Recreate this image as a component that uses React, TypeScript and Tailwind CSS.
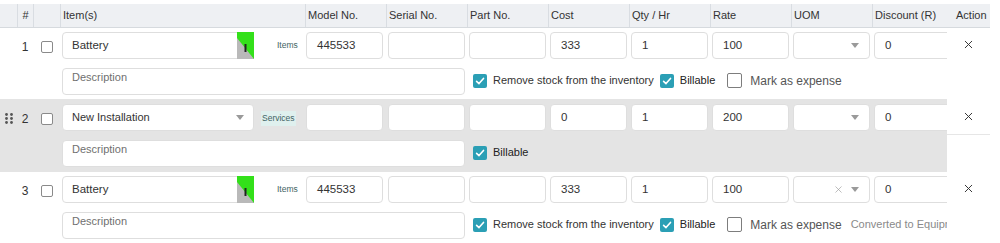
import { X } from "lucide-react";

type Row = {
  id: number;
  item: string;
  kind: "Items" | "Services";
  model: string;
  cost: string;
  qty: string;
  rate: string;
  discount: string;
  shaded?: boolean;
  clearable?: boolean;
  converted?: boolean;
};

const rows: Row[] = [
  { id: 1, item: "Battery", kind: "Items", model: "445533", cost: "333", qty: "1", rate: "100", discount: "0" },
  { id: 2, item: "New Installation", kind: "Services", model: "", cost: "0", qty: "1", rate: "200", discount: "0", shaded: true },
  { id: 3, item: "Battery", kind: "Items", model: "445533", cost: "333", qty: "1", rate: "100", discount: "0", clearable: true, converted: true },
];

const headers = ["", "#", "", "Item(s)", "Model No.", "Serial No.", "Part No.", "Cost", "Qty / Hr", "Rate", "UOM", "Discount (R)", "Action"];

const grid =
  "grid grid-cols-[17px_16px_27px_245px_81px_81px_81px_81px_81px_81px_81px_75px_43px]";

const inputCls =
  "flex h-[27px] w-[77px] items-center rounded-[4px] border border-[#dedede] bg-white pl-[10px] text-[11.5px] text-[#333]";

function Caret() {
  return (
    <svg width="8" height="5" viewBox="0 0 8 5" className="shrink-0">
      <path d="M0 0 L8 0 L4 5 Z" fill="#9a9a9a" />
    </svg>
  );
}

function Check({ checked }: { checked: boolean }) {
  if (!checked) {
    return <span className="block h-[15px] w-[15px] shrink-0 rounded-[2px] border border-[#7d7d7d] bg-white" />;
  }
  return (
    <span className="flex h-[14px] w-[14px] shrink-0 items-center justify-center rounded-[2px] bg-[#2b9fb5]">
      <svg width="10" height="10" viewBox="0 0 10 10">
        <path d="M1.6 5.3 L4 7.6 L8.5 2.4" stroke="white" strokeWidth="1.6" fill="none" strokeLinecap="round" strokeLinejoin="round" />
      </svg>
    </span>
  );
}

function DragHandle() {
  return (
    <svg width="8" height="11" viewBox="0 0 8 11">
      {[0, 1].map((c) =>
        [0, 1, 2].map((r) => <circle key={`${c}-${r}`} cx={1.5 + c * 5} cy={1.5 + r * 4} r="1.4" fill="#555" />)
      )}
    </svg>
  );
}

function ItemField({ row }: { row: Row }) {
  if (row.kind === "Services") {
    return (
      <div className="flex h-[27px] w-[192px] items-center justify-between rounded-[4px] border border-[#dedede] bg-white pl-[9px] pr-[9px] text-[11px] text-[#333]">
        {row.item}
        <Caret />
      </div>
    );
  }
  return (
    <div className="relative flex h-[27px] w-[192px] items-center rounded-[4px] border border-[#dedede] bg-white pl-[9px] text-[11.5px] text-[#333]">
      {row.item}
      {/* colour picker swatch */}
      <svg width="17" height="27" viewBox="0 0 17 27" className="absolute -right-px -top-px">
        <rect width="17" height="27" fill="#b9b9b9" />
        <polygon points="0,0 17,0 17,27 0,6" fill="#33e01a" />
        <rect x="7.5" y="12" width="2" height="8" fill="#222" />
      </svg>
    </div>
  );
}

export default function App() {
  return (
    <div className="h-[243px] w-[1000px] overflow-hidden bg-white pt-[4px] font-['Liberation_Sans',Arial,sans-serif] text-[#333]">
      {/* Header */}
      <div className={`${grid} h-[24px] w-[990px] border-b border-[#d6dade] bg-[#eef0f3] text-[11px]`}>
        {headers.map((h, i) => (
          <div
            key={i}
            className={`flex items-center ${i > 0 && i < 12 ? "border-l border-[#d9dde2]" : ""} ${
              i === 1 ? "justify-center" : i === 12 ? "pl-[9px]" : "pl-[2px]"
            }`}
          >
            {h}
          </div>
        ))}
      </div>

      {rows.map((row) => (
        <div
          key={row.id}
          className={`${grid} h-[72px] w-[990px] grid-rows-[36px_36px] border-b border-[#e4e4e4] ${
            row.shaded ? "bg-[#e4e4e4]" : "bg-white"
          }`}
        >
          {/* input line */}
          <div className="flex h-[35px] items-center justify-center pt-[2px]">{row.shaded && <DragHandle />}</div>
          <div className="flex h-[35px] items-center justify-center pt-[2px] text-[12px]">{row.id}</div>
          <div className="flex h-[35px] items-center justify-center pt-[2px]">
            <span className="block h-[12px] w-[12px] rounded-[2px] border border-[#8a8a8a] bg-white" />
          </div>
          <div className="flex items-start pl-[2px] pt-[4px]">
            <ItemField row={row} />
            {row.kind === "Items" ? (
              <span className="ml-[23px] mt-[7px] text-[8.5px] text-[#3f6464]">Items</span>
            ) : (
              <span className="ml-[7px] mt-[7px] bg-[#dff0ee] px-[1px] py-[1px] text-[8.5px] text-[#3f6464]">Services</span>
            )}
          </div>
          <div className="pl-[1px] pt-[4px]">
            <div className={inputCls}>{row.model}</div>
          </div>
          <div className="pl-[2px] pt-[4px]">
            <div className={`${inputCls} w-[76px]`} />
          </div>
          <div className="pl-[2px] pt-[4px]">
            <div className={`${inputCls} w-[76px]`} />
          </div>
          <div className="pl-[2px] pt-[4px]">
            <div className={`${inputCls} w-[76px]`}>{row.cost}</div>
          </div>
          <div className="pl-[2px] pt-[4px]">
            <div className={`${inputCls} w-[76px]`}>{row.qty}</div>
          </div>
          <div className="pl-[2px] pt-[4px]">
            <div className={inputCls}>{row.rate}</div>
          </div>
          <div className="pl-[2px] pt-[4px]">
            <div className={`${inputCls} justify-end gap-[7px] pr-[10px]`}>
              {row.clearable && <X size={11} strokeWidth={1.4} color="#9a9a9a" />}
              <Caret />
            </div>
          </div>
          <div className="overflow-hidden pl-[2px] pt-[4px]">
            <div className={`${inputCls} w-[100px] pl-[9px]`}>{row.discount}</div>
          </div>
          <div className="row-span-2 flex flex-col bg-white">
            <div
              className={`flex h-[35px] items-center justify-center pb-[2px] ${
                row.shaded ? "border-b border-[#e6e6e6]" : ""
              }`}
            >
              <X size={13} strokeWidth={1.8} color="#333" />
            </div>
          </div>

          {/* description line */}
          <div className="col-span-3" />
          <div className="col-span-3 pl-[2px] pr-[2px] pt-[4px]">
            <div className="h-[27px] rounded-[4px] border border-[#dedede] bg-white pl-[9px] pt-[2px] text-[11px] leading-[13px] text-[#6f6f6f]">
              Description
            </div>
          </div>
          <div className="col-span-6 mt-[3px] flex h-[27px] items-center overflow-hidden whitespace-nowrap pl-[6px]">
            {row.kind === "Items" && (
              <>
                <Check checked />
                <span className="ml-[6px] text-[11px] text-[#333]">Remove stock from the inventory</span>
                <span className="ml-[6px]" />
              </>
            )}
            <Check checked />
            <span className="ml-[6px] text-[11px] text-[#222]">Billable</span>
            {row.kind === "Items" && (
              <>
                <span className="ml-[12px]" />
                <Check checked={false} />
                <span className="ml-[8px] text-[12px] text-[#555]">Mark as expense</span>
              </>
            )}
            {row.converted && <span className="ml-[9px] text-[11px] text-[#8a8a8a]">Converted to Equipment</span>}
          </div>
        </div>
      ))}
    </div>
  );
}
